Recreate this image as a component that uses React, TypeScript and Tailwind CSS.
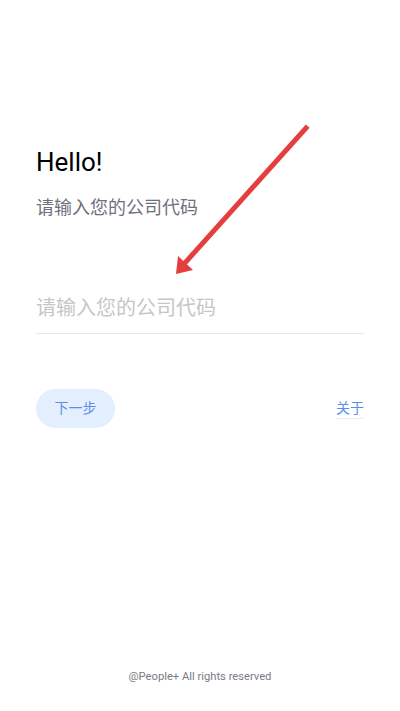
import { useState } from "react";

export default function App() {
  const [code, setCode] = useState("");

  return (
    <div
      className="relative flex flex-col min-h-[711px] h-screen w-full bg-white px-9"
      style={{ fontFamily: "Roboto, 'Noto Sans CJK SC', sans-serif" }}
    >
      {/* Heading */}
      <h1 className="mt-[146px] text-[26px] leading-[32px] text-black">Hello!</h1>
      <p className="mt-[17px] text-[18px] leading-[26px] text-[#70707c]">请输入您的公司代码</p>

      {/* Company code input */}
      <div className="mt-[72px] border-b border-[#e6e6e6] pb-[10px]">
        <input
          value={code}
          onChange={(e) => setCode(e.target.value)}
          placeholder="请输入您的公司代码"
          className="w-full h-[30px] text-[20px] leading-[30px] text-black placeholder:text-[#c6c6c6] outline-none bg-transparent"
        />
      </div>

      {/* Actions */}
      <div className="mt-[55px] flex items-center justify-between">
        <button className="h-[39px] w-[79px] rounded-full bg-[#e3eefe] text-[14px] text-[#5b8ee6]">
          下一步
        </button>
        <button className="text-[14px] leading-[20px] text-[#5b8ee6] border-b border-[#e3eefe]">关于</button>
      </div>

      {/* Footer */}
      <footer className="mt-auto pb-[26px] text-center text-[11.2px] leading-[16px] text-[#7b7b86]">
        @People+ All rights reserved
      </footer>

      {/* Annotation arrow */}
      <svg
        className="absolute left-0 top-0 pointer-events-none"
        width="400"
        height="711"
        viewBox="0 0 400 711"
      >
        <line x1="306" y1="128" x2="184" y2="264" stroke="#e53e3e" strokeWidth="5" strokeLinecap="square" />
        <polygon points="176,274 178,256 193,270" fill="#e53e3e" />
      </svg>
    </div>
  );
}
